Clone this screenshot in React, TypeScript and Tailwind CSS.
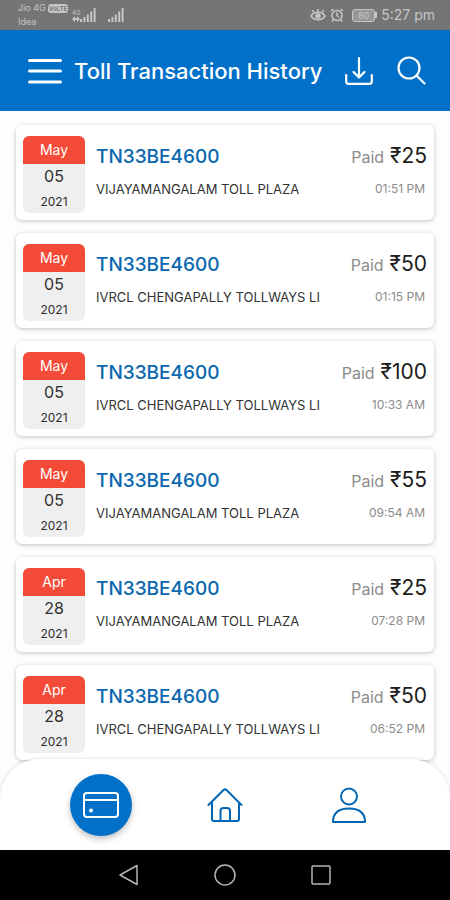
import { useState } from "react";

type Transaction = {
  month: string;
  day: string;
  year: string;
  vehicle: string;
  plaza: string;
  amount: number;
  time: string;
};

const transactions: Transaction[] = [
  { month: "May", day: "05", year: "2021", vehicle: "TN33BE4600", plaza: "VIJAYAMANGALAM TOLL PLAZA", amount: 25, time: "01:51 PM" },
  { month: "May", day: "05", year: "2021", vehicle: "TN33BE4600", plaza: "IVRCL CHENGAPALLY TOLLWAYS LI", amount: 50, time: "01:15 PM" },
  { month: "May", day: "05", year: "2021", vehicle: "TN33BE4600", plaza: "IVRCL CHENGAPALLY TOLLWAYS LI", amount: 100, time: "10:33 AM" },
  { month: "May", day: "05", year: "2021", vehicle: "TN33BE4600", plaza: "VIJAYAMANGALAM TOLL PLAZA", amount: 55, time: "09:54 AM" },
  { month: "Apr", day: "28", year: "2021", vehicle: "TN33BE4600", plaza: "VIJAYAMANGALAM TOLL PLAZA", amount: 25, time: "07:28 PM" },
  { month: "Apr", day: "28", year: "2021", vehicle: "TN33BE4600", plaza: "IVRCL CHENGAPALLY TOLLWAYS LI", amount: 50, time: "06:52 PM" },
];

function SignalBars() {
  return (
    <svg width="16" height="14" viewBox="0 0 16 14" fill="currentColor" aria-hidden="true">
      <rect x="0" y="11" width="2" height="3" />
      <rect x="3.4" y="9" width="2" height="5" />
      <rect x="6.8" y="6.5" width="2" height="7.5" />
      <rect x="10.2" y="3.5" width="2" height="10.5" />
      <rect x="13.6" y="0" width="2" height="14" />
    </svg>
  );
}

function StatusBar() {
  return (
    <div className="flex h-[30px] shrink-0 items-center justify-between bg-[#757575] pl-[18px] pr-[15px] text-[#c6c6c6]">
      <div className="flex items-center">
        <div className="w-[50px] text-[9px] leading-[14px]">
          <div className="flex items-center gap-[2px]">
            <span className="whitespace-nowrap">Jio 4G</span>
            <span className="rounded-[3px] bg-[#c6c6c6] px-px text-[6px] font-bold leading-[9px] text-[#757575]">VoLTE</span>
          </div>
          <div>Idea</div>
        </div>
        <div className="ml-1 flex items-center gap-3">
          <div className="flex items-end">
            <div className="flex flex-col items-center text-[6px] leading-[6px]">
              <span>4G</span>
              <svg width="8" height="6" viewBox="0 0 8 6" fill="currentColor" aria-hidden="true">
                <path d="M0 3l3-3v2h2V0l3 3-3 3V4H3v2z" />
              </svg>
            </div>
            <SignalBars />
          </div>
          <SignalBars />
        </div>
      </div>
      <div className="flex items-center gap-1">
        <svg width="16" height="14" viewBox="0 0 16 14" fill="none" stroke="currentColor" strokeWidth="1.5" aria-hidden="true">
          <path d="M1 8c3-5 11-5 14 0-3 5-11 5-14 0z" />
          <circle cx="8" cy="8" r="2" fill="currentColor" />
          <path d="M8 1v3M2.5 2L4 5M13.5 2L12 5" />
        </svg>
        <svg width="14" height="14" viewBox="0 0 14 14" fill="none" stroke="currentColor" strokeWidth="1.5" aria-hidden="true">
          <circle cx="7" cy="7.5" r="5" />
          <path d="M7 4.5v3L9 9M1 3l2.5-2M13 3l-2.5-2M3.5 11.5L2 13.5M10.5 11.5l1.5 2" />
        </svg>
        <div className="ml-1 flex items-center">
          <span className="rounded-[3px] border border-current bg-[#979797] px-[5px] text-[9px] leading-[11px]">80</span>
          <span className="h-[6px] w-[2px] bg-current" />
        </div>
        <span className="text-[14px] leading-5">5:27 pm</span>
      </div>
    </div>
  );
}

function Header() {
  return (
    <header className="flex h-[81px] shrink-0 items-center bg-[#0070c9] pl-7 pr-6 text-white">
      <button aria-label="Open menu" className="shrink-0">
        <svg width="34" height="26" viewBox="0 0 34 26" fill="none" stroke="currentColor" strokeWidth="3" strokeLinecap="round">
          <path d="M1.500 2.500h31M1.500 13h31M1.500 24h31" />
        </svg>
      </button>
      <h1 className="ml-3 flex-1 whitespace-nowrap text-[22px] font-medium leading-7">
        Toll Transaction History
      </h1>
      <div className="flex shrink-0 items-center gap-6">
        <button aria-label="Download">
          <svg width="28" height="28" viewBox="0 0 28 28" fill="none" stroke="currentColor" strokeWidth="2.2" strokeLinecap="round" strokeLinejoin="round">
            <path d="M14 1.2v19.3M8.500 15l5.500 5.500 5.500-5.500M1.200 18v6.500q0 2.300 2.300 2.300h21q2.300 0 2.300-2.300V18" />
          </svg>
        </button>
        <button aria-label="Search">
          <svg width="29" height="29" viewBox="0 0 29 29" fill="none" stroke="currentColor" strokeWidth="2.2" strokeLinecap="round">
            <circle cx="12" cy="12" r="10.5" />
            <path d="M19.500 19.500l8 8" />
          </svg>
        </button>
      </div>
    </header>
  );
}

function TransactionCard({ item }: { item: Transaction }) {
  return (
    <li className="flex h-[95px] items-start rounded-md bg-white px-[7px] pt-[11px] shadow-[0_1px_4px_rgba(0,0,0,0.24)]">
      <div className="h-[77px] w-[62px] shrink-0 overflow-hidden rounded-md bg-[#efefef] text-center text-[#303030]">
        <div className="bg-[#f44b38] text-[14px] leading-7 text-white">{item.month}</div>
        <div className="text-[16px] leading-6">{item.day}</div>
        <div className="pt-1 text-[12px] leading-5">{item.year}</div>
      </div>
      <div className="ml-[11px] min-w-0 flex-1 pt-[6px]">
        <div className="flex items-center justify-between leading-7">
          <span className="text-[19px] font-medium text-[#0867ae]">{item.vehicle}</span>
          <span className="flex items-baseline gap-[6px]">
            <span className="text-[16px] text-[#8b8b8b]">Paid</span>
            <span className="text-[21px] text-[#1c1c1c]">₹{item.amount}</span>
          </span>
        </div>
        <div className="flex items-center justify-between pt-2 leading-5">
          <span className="truncate text-[13px] text-[#333]">{item.plaza}</span>
          <span className="shrink-0 pr-[2px] text-[12px] text-[#8b8b8b]">{item.time}</span>
        </div>
      </div>
    </li>
  );
}

const tabs = [
  {
    label: "Transactions",
    icon: (
      <svg width="38" height="28" viewBox="0 0 38 28" fill="none" stroke="currentColor" strokeWidth="2">
        <rect x="2" y="2" width="34" height="24" rx="3" />
        <path d="M2 9h34" />
        <circle cx="9" cy="19.5" r="2" fill="currentColor" stroke="none" />
      </svg>
    ),
  },
  {
    label: "Home",
    icon: (
      <svg width="36" height="34" viewBox="0 0 36 34" fill="none" stroke="currentColor" strokeWidth="2" strokeLinejoin="round" strokeLinecap="round">
        <path d="M1.500 17L16.500 2q1.500-1.200 3 0l15 15M5 14.500v16.500q0 2 2 2h23q2 0 2-2V14.500" />
        <path d="M13.500 33V23q0-3 3-3h3.500q3 0 3 3v10" />
      </svg>
    ),
  },
  {
    label: "Profile",
    icon: (
      <svg width="34" height="36" viewBox="0 0 34 36" fill="none" stroke="currentColor" strokeWidth="2" strokeLinejoin="round">
        <circle cx="17" cy="9.5" r="8" />
        <path d="M1 35q0-13.500 16-13.500T33 35z" />
      </svg>
    ),
  },
];

export default function App() {
  const [active, setActive] = useState(0);

  return (
    <div className="flex h-screen flex-col overflow-hidden bg-[#fdfdfd] font-['Inter',sans-serif]">
      <StatusBar />
      <Header />

      <main className="min-h-0 flex-1 overflow-hidden px-[15px] pt-[14px]">
        <ul className="flex flex-col gap-[13px] px-px">
          {transactions.map((item, index) => (
            <TransactionCard key={index} item={item} />
          ))}
        </ul>
      </main>

      {/* Bottom tabs, rounded over the end of the list */}
      <nav className="relative -mt-10 flex h-[91px] shrink-0 items-center justify-around rounded-t-[40px] bg-white px-[39px] shadow-[0_0_4px_rgba(0,0,0,0.14)]">
        {tabs.map((tab, index) => (
          <button
            key={tab.label}
            aria-label={tab.label}
            onClick={() => setActive(index)}
            className={`flex size-[62px] items-center justify-center rounded-full ${
              index === active ? "bg-[#0070c9] text-white shadow-[0_3px_6px_rgba(0,0,0,0.25)]" : "text-[#0065b3]"
            }`}
          >
            {tab.icon}
          </button>
        ))}
      </nav>

      {/* System navigation */}
      <div className="relative flex h-[50px] shrink-0 items-center justify-center gap-[75px] bg-black text-[#b5b5b5]">
        <button aria-label="Back">
          <svg width="20" height="22" viewBox="0 0 20 22" fill="none" stroke="currentColor" strokeWidth="1.5" strokeLinejoin="round">
            <path d="M1 11L18 1.500v19z" />
          </svg>
        </button>
        <button aria-label="Home screen">
          <svg width="22" height="22" viewBox="0 0 22 22" fill="none" stroke="currentColor" strokeWidth="1.5">
            <circle cx="11" cy="11" r="10" />
          </svg>
        </button>
        <button aria-label="Recent apps">
          <svg width="20" height="20" viewBox="0 0 20 20" fill="none" stroke="currentColor" strokeWidth="1.5">
            <rect x="1" y="1" width="18" height="18" rx="1" />
          </svg>
        </button>
      </div>
    </div>
  );
}
